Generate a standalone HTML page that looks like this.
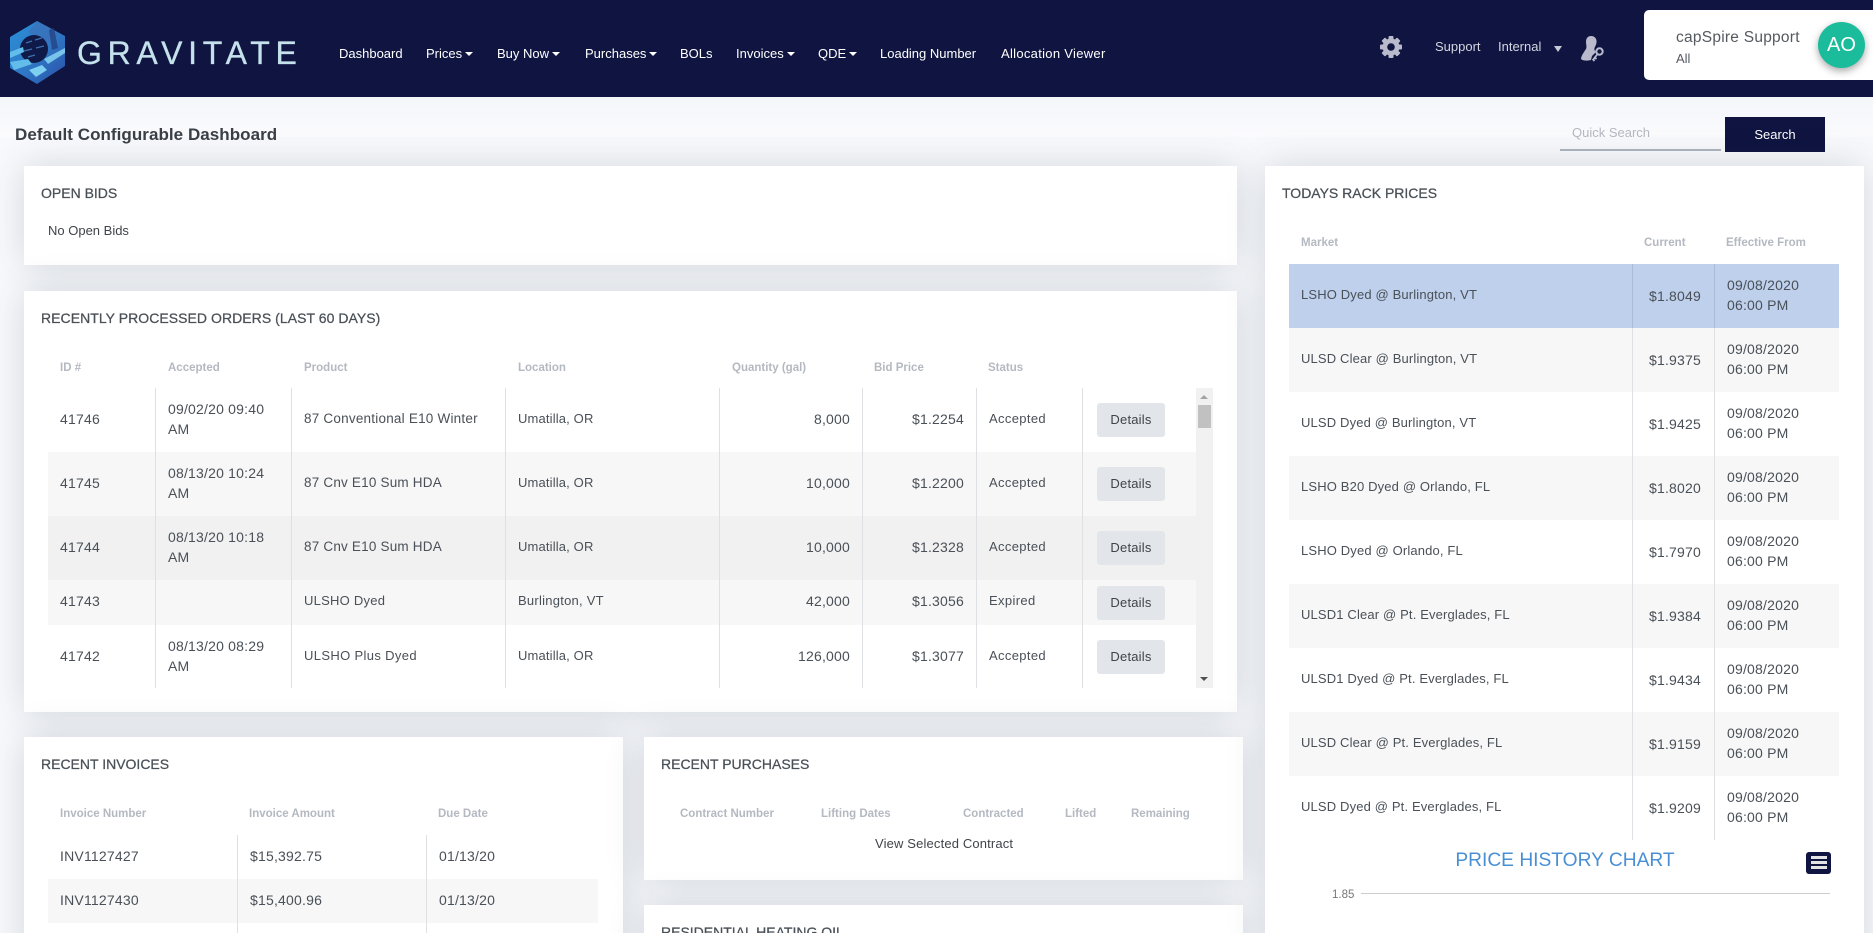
<!DOCTYPE html>
<html><head><meta charset="utf-8"><title>Gravitate</title>
<style>
html{margin:0;padding:0;width:1873px;height:933px;overflow:hidden}
body{margin:0;padding:0;width:1873px;height:933px;overflow:hidden;position:relative;background:#f8f9fc;font-family:"Liberation Sans",sans-serif;color:#3f444a;font-size:13px}
.a,.t,.h,.c,.n,.r{position:absolute}
.t,.h,.c,.n,.r{white-space:nowrap;line-height:20px}
.h{font-weight:bold;font-size:11.5px;color:#b4b9c1}
.c{font-size:13px;color:#495057;letter-spacing:.15px}
.n{color:#fff;font-size:13px}
.r{text-align:right}
.d,.m,.i{font-size:14px;letter-spacing:.2px}
.ct{position:absolute;white-space:nowrap;line-height:20px;font-size:14px;color:#495057;-webkit-text-stroke:.25px #495057}
.card{position:absolute;background:#fff;box-shadow:0 0 35px rgba(40,60,80,.18)}
.ln{position:absolute;width:1px;background:#dee0e3}
.g{position:absolute;background:#f7f7f7}
.g2{position:absolute;background:#f1f1f1}
.b{position:absolute;left:1097px;width:68px;height:34px;background:#e2e6ea;border-radius:3px;text-align:center;line-height:34px;color:#3f444a;font-size:13px;letter-spacing:.2px}
.car{display:inline-block;margin-left:3px;vertical-align:2px;border-left:4px solid transparent;border-right:4px solid transparent;border-top:4px solid #fff}
</style></head><body>

<div class="a" style="left:0;top:0;width:1873px;height:97px;background:#0f1440"></div>
<div class="a" style="left:0;top:97px;width:1873px;height:40px;background:linear-gradient(#f4f6fa,#fbfbfe)"></div>

<svg class="a" style="left:8px;top:18px" width="60" height="70" viewBox="0 0 60 70">
<defs><linearGradient id="lg" x1="0" y1="0" x2="1" y2="1"><stop offset="0" stop-color="#2a90d8"/><stop offset=".55" stop-color="#2f77c4"/><stop offset="1" stop-color="#2a4ea8"/></linearGradient></defs>
<polygon points="29,3 57,18 57,48 29,66 2,50 2,19" fill="url(#lg)"/>
<path d="M29 3L44 11 50 17 38 26 20 14Z" fill="#3f6db4" opacity=".55"/>
<circle cx="26" cy="31" r="14" fill="#0f1a48"/>
<path d="M18 25l6-2M27 22l7-2M16 33l8-2M28 30l8-2M20 39l7-2" stroke="#3d6fb0" stroke-width="1.4"/>
<path d="M2 34L15 29 16 34 2 40ZM2 44L20 41 24 46 6 52Z" fill="#63bdea"/>
<path d="M21 52L34 47 39 52 28 59Z" fill="#7ed0f0"/>
<path d="M36 41L57 30 57 35 40 46Z" fill="#78c4ea"/>
<path d="M41 12L46 10 50 30 44 32Z" fill="#243c7c" opacity=".7"/>
</svg>
<div class="t" style="left:77px;top:35px;line-height:36px;font-size:32px;letter-spacing:5.7px;color:#c4e1ec;-webkit-text-stroke:.3px #c4e1ec">GRAVITATE</div>

<div class="n" style="left:339px;top:44px">Dashboard</div>
<div class="n" style="left:426px;top:44px">Prices<span class="car"></span></div>
<div class="n" style="left:497px;top:44px">Buy Now<span class="car"></span></div>
<div class="n" style="left:585px;top:44px">Purchases<span class="car"></span></div>
<div class="n" style="left:680px;top:44px">BOLs</div>
<div class="n" style="left:736px;top:44px">Invoices<span class="car"></span></div>
<div class="n" style="left:818px;top:44px">QDE<span class="car"></span></div>
<div class="n" style="left:880px;top:44px">Loading Number</div>
<div class="n" style="left:1001px;top:44px;letter-spacing:.3px">Allocation Viewer</div>

<svg class="a" style="left:1379px;top:35px" width="24" height="24" viewBox="0 0 24 24">
<g fill="#b9bacb"><rect x="9.5" y="1" width="5" height="22" rx="1"/><rect x="9.5" y="1" width="5" height="22" rx="1" transform="rotate(45 12 12)"/><rect x="9.5" y="1" width="5" height="22" rx="1" transform="rotate(90 12 12)"/><rect x="9.5" y="1" width="5" height="22" rx="1" transform="rotate(135 12 12)"/><circle cx="12" cy="12" r="8.5"/></g>
<circle cx="12" cy="12" r="3.8" fill="#0f1440"/></svg>
<div class="n" style="left:1435px;top:37px;color:#d5d6e0">Support</div>
<div class="n" style="left:1498px;top:37px;color:#d5d6e0">Internal</div>
<div class="a" style="left:1554px;top:46px;border-left:4.5px solid transparent;border-right:4.5px solid transparent;border-top:6px solid #c8c9d6"></div>
<svg class="a" style="left:1581px;top:36px" width="24" height="26" viewBox="0 0 24 26">
<path d="M10 0C14 0 16 3 15.5 6.5C15.200 9 14 10.500 13.500 12C13 14 14 15 15 16L11 20 10 24C6 25 2 25 0 23C0 20 3 16 5 13C6 11 5 8 5 6C5 2 7 0 10 0Z" fill="#b9bacb"/>
<circle cx="18.500" cy="15.500" r="3.200" fill="none" stroke="#b9bacb" stroke-width="2"/>
<path d="M16.500 18L12 24M13 21l2.500 2M11.500 23l2 2" stroke="#b9bacb" stroke-width="1.800" fill="none"/></svg>

<div class="a" style="left:1644px;top:10px;width:229px;height:70px;background:#fff;border-radius:5px 0 0 5px"></div>
<div class="t" style="left:1676px;top:28px;font-size:15.5px;color:#555a60;letter-spacing:.25px">capSpire Support</div>
<div class="t" style="left:1676px;top:49px;font-size:13px;color:#555a60">All</div>
<div class="a" style="left:1818px;top:22px;width:47px;height:46px;border-radius:50%;background:#1abc9c;box-shadow:0 3px 8px rgba(0,0,0,.35);color:#fff;font-size:20px;line-height:46px;text-align:center">AO</div>

<div class="t" style="left:15px;top:125px;font-size:17px;font-weight:bold;color:#3a4046;letter-spacing:.05px">Default Configurable Dashboard</div>
<div class="t" style="left:1572px;top:123px;font-size:13px;color:#b4b8c0">Quick Search</div>
<div class="a" style="left:1560px;top:149px;width:161px;height:2px;background:#adb5bd"></div>
<div class="a" style="left:1725px;top:117px;width:100px;height:35px;background:#0f1440;color:#fff;text-align:center;line-height:35px;font-size:13px">Search</div>

<div class="card" style="left:24px;top:166px;width:1213px;height:99px"></div>
<div class="card" style="left:24px;top:291px;width:1213px;height:421px"></div>
<div class="card" style="left:24px;top:737px;width:599px;height:230px"></div>
<div class="card" style="left:644px;top:737px;width:599px;height:143px"></div>
<div class="card" style="left:644px;top:905px;width:599px;height:60px"></div>
<div class="card" style="left:1265px;top:166px;width:599px;height:800px"></div>

<div class="ct" style="left:41px;top:183px">OPEN BIDS</div>
<div class="t" style="left:48px;top:221px;font-size:13px;color:#3f444a">No Open Bids</div>

<div class="ct" style="left:41px;top:308px;letter-spacing:.05px">RECENTLY PROCESSED ORDERS (LAST 60 DAYS)</div>
<div class="h" style="left:60px;top:358px">ID #</div>
<div class="h" style="left:168px;top:358px">Accepted</div>
<div class="h" style="left:304px;top:358px">Product</div>
<div class="h" style="left:518px;top:358px">Location</div>
<div class="h" style="left:732px;top:358px">Quantity (gal)</div>
<div class="h" style="left:874px;top:358px">Bid Price</div>
<div class="h" style="left:988px;top:358px">Status</div>

<div class="g" style="left:48px;top:452px;width:1148px;height:64px"></div>
<div class="g2" style="left:48px;top:516px;width:1148px;height:64px"></div>
<div class="g" style="left:48px;top:580px;width:1148px;height:45px"></div>
<div class="ln" style="left:155px;top:388px;height:300px"></div>
<div class="ln" style="left:291px;top:388px;height:300px"></div>
<div class="ln" style="left:505px;top:388px;height:300px"></div>
<div class="ln" style="left:719px;top:388px;height:300px"></div>
<div class="ln" style="left:862px;top:388px;height:300px"></div>
<div class="ln" style="left:976px;top:388px;height:300px"></div>
<div class="ln" style="left:1082px;top:388px;height:300px"></div>

<div class="c i" style="left:60px;top:409px">41746</div>
<div class="c d" style="left:168px;top:399px">09/02/20 09:40<br>AM</div>
<div class="c" style="left:304px;top:409px;font-size:13.5px;letter-spacing:.22px">87 Conventional E10 Winter</div>
<div class="c" style="left:518px;top:409px">Umatilla, OR</div>
<div class="c r m" style="right:1023px;top:409px">8,000</div>
<div class="c r m" style="right:909px;top:409px">$1.2254</div>
<div class="c" style="left:989px;top:409px;letter-spacing:.35px">Accepted</div>
<div class="b" style="top:403px">Details</div>

<div class="c i" style="left:60px;top:473px">41745</div>
<div class="c d" style="left:168px;top:463px">08/13/20 10:24<br>AM</div>
<div class="c" style="left:304px;top:473px;font-size:13.5px;letter-spacing:.2px">87 Cnv E10 Sum HDA</div>
<div class="c" style="left:518px;top:473px">Umatilla, OR</div>
<div class="c r m" style="right:1023px;top:473px">10,000</div>
<div class="c r m" style="right:909px;top:473px">$1.2200</div>
<div class="c" style="left:989px;top:473px;letter-spacing:.35px">Accepted</div>
<div class="b" style="top:467px">Details</div>

<div class="c i" style="left:60px;top:537px">41744</div>
<div class="c d" style="left:168px;top:527px">08/13/20 10:18<br>AM</div>
<div class="c" style="left:304px;top:537px;font-size:13.5px;letter-spacing:.2px">87 Cnv E10 Sum HDA</div>
<div class="c" style="left:518px;top:537px">Umatilla, OR</div>
<div class="c r m" style="right:1023px;top:537px">10,000</div>
<div class="c r m" style="right:909px;top:537px">$1.2328</div>
<div class="c" style="left:989px;top:537px;letter-spacing:.35px">Accepted</div>
<div class="b" style="top:531px">Details</div>

<div class="c i" style="left:60px;top:591px">41743</div>
<div class="c" style="left:304px;top:591px;letter-spacing:.25px">ULSHO Dyed</div>
<div class="c" style="left:518px;top:591px;letter-spacing:.25px">Burlington, VT</div>
<div class="c r m" style="right:1023px;top:591px">42,000</div>
<div class="c r m" style="right:909px;top:591px">$1.3056</div>
<div class="c" style="left:989px;top:591px;letter-spacing:.35px">Expired</div>
<div class="b" style="top:586px">Details</div>

<div class="c i" style="left:60px;top:646px">41742</div>
<div class="c d" style="left:168px;top:636px">08/13/20 08:29<br>AM</div>
<div class="c" style="left:304px;top:646px;letter-spacing:.35px">ULSHO Plus Dyed</div>
<div class="c" style="left:518px;top:646px">Umatilla, OR</div>
<div class="c r m" style="right:1023px;top:646px">126,000</div>
<div class="c r m" style="right:909px;top:646px">$1.3077</div>
<div class="c" style="left:989px;top:646px;letter-spacing:.35px">Accepted</div>
<div class="b" style="top:640px">Details</div>

<div class="a" style="left:1196px;top:388px;width:17px;height:300px;background:#f1f1f1"></div>
<div class="a" style="left:1198px;top:405px;width:13px;height:23px;background:#c1c1c1"></div>
<div class="a" style="left:1200px;top:395px;border-left:4px solid transparent;border-right:4px solid transparent;border-bottom:4px solid #a3a3a3"></div>
<div class="a" style="left:1200px;top:677px;border-left:4px solid transparent;border-right:4px solid transparent;border-top:4px solid #505050"></div>

<div class="ct" style="left:41px;top:754px">RECENT INVOICES</div>
<div class="h" style="left:60px;top:804px">Invoice Number</div>
<div class="h" style="left:249px;top:804px">Invoice Amount</div>
<div class="h" style="left:438px;top:804px">Due Date</div>
<div class="g" style="left:48px;top:879px;width:550px;height:44px"></div>
<div class="ln" style="left:237px;top:835px;height:98px"></div>
<div class="ln" style="left:426px;top:835px;height:98px"></div>
<div class="c i" style="left:60px;top:846px">INV1127427</div>
<div class="c i" style="left:250px;top:846px">$15,392.75</div>
<div class="c i" style="left:439px;top:846px">01/13/20</div>
<div class="c i" style="left:60px;top:890px">INV1127430</div>
<div class="c i" style="left:250px;top:890px">$15,400.96</div>
<div class="c i" style="left:439px;top:890px">01/13/20</div>

<div class="ct" style="left:661px;top:754px">RECENT PURCHASES</div>
<div class="h" style="left:680px;top:804px">Contract Number</div>
<div class="h" style="left:821px;top:804px">Lifting Dates</div>
<div class="h" style="left:963px;top:804px">Contracted</div>
<div class="h" style="left:1065px;top:804px">Lifted</div>
<div class="h" style="left:1131px;top:804px">Remaining</div>
<div class="c" style="left:875px;top:834px;color:#3f444a">View Selected Contract</div>
<div class="ct" style="left:661px;top:922px">RESIDENTIAL HEATING OIL</div>

<div class="ct" style="left:1282px;top:183px">TODAYS RACK PRICES</div>
<div class="h" style="left:1301px;top:233px">Market</div>
<div class="h" style="left:1644px;top:233px">Current</div>
<div class="h" style="left:1726px;top:233px">Effective From</div>

<div class="a" style="left:1289px;top:264px;width:550px;height:64px;background:#bfd0ec"></div>
<div class="g" style="left:1289px;top:328px;width:550px;height:64px"></div>
<div class="g" style="left:1289px;top:456px;width:550px;height:64px"></div>
<div class="g" style="left:1289px;top:584px;width:550px;height:64px"></div>
<div class="g" style="left:1289px;top:712px;width:550px;height:64px"></div>
<div class="ln" style="left:1632px;top:264px;height:576px"></div>
<div class="ln" style="left:1714px;top:264px;height:576px"></div>
<div class="a" style="left:1632px;top:264px;width:1px;height:64px;background:#a9bbd8"></div>
<div class="a" style="left:1714px;top:264px;width:1px;height:64px;background:#a9bbd8"></div>

<div class="c" style="left:1301px;top:285px">LSHO Dyed @ Burlington, VT</div><div class="c r m" style="right:172px;top:286px">$1.8049</div><div class="c d" style="left:1727px;top:275px">09/08/2020<br>06:00 PM</div>
<div class="c" style="left:1301px;top:349px">ULSD Clear @ Burlington, VT</div><div class="c r m" style="right:172px;top:350px">$1.9375</div><div class="c d" style="left:1727px;top:339px">09/08/2020<br>06:00 PM</div>
<div class="c" style="left:1301px;top:413px">ULSD Dyed @ Burlington, VT</div><div class="c r m" style="right:172px;top:414px">$1.9425</div><div class="c d" style="left:1727px;top:403px">09/08/2020<br>06:00 PM</div>
<div class="c" style="left:1301px;top:477px">LSHO B20 Dyed @ Orlando, FL</div><div class="c r m" style="right:172px;top:478px">$1.8020</div><div class="c d" style="left:1727px;top:467px">09/08/2020<br>06:00 PM</div>
<div class="c" style="left:1301px;top:541px">LSHO Dyed @ Orlando, FL</div><div class="c r m" style="right:172px;top:542px">$1.7970</div><div class="c d" style="left:1727px;top:531px">09/08/2020<br>06:00 PM</div>
<div class="c" style="left:1301px;top:605px">ULSD1 Clear @ Pt. Everglades, FL</div><div class="c r m" style="right:172px;top:606px">$1.9384</div><div class="c d" style="left:1727px;top:595px">09/08/2020<br>06:00 PM</div>
<div class="c" style="left:1301px;top:669px">ULSD1 Dyed @ Pt. Everglades, FL</div><div class="c r m" style="right:172px;top:670px">$1.9434</div><div class="c d" style="left:1727px;top:659px">09/08/2020<br>06:00 PM</div>
<div class="c" style="left:1301px;top:733px">ULSD Clear @ Pt. Everglades, FL</div><div class="c r m" style="right:172px;top:734px">$1.9159</div><div class="c d" style="left:1727px;top:723px">09/08/2020<br>06:00 PM</div>
<div class="c" style="left:1301px;top:797px">ULSD Dyed @ Pt. Everglades, FL</div><div class="c r m" style="right:172px;top:798px">$1.9209</div><div class="c d" style="left:1727px;top:787px">09/08/2020<br>06:00 PM</div>

<div class="t" style="left:1425px;width:280px;text-align:center;top:851px;font-size:19.2px;color:#4a8fd4">PRICE HISTORY CHART</div>
<div class="a" style="left:1806px;top:852px;width:25px;height:22px;background:#101440;border-radius:3px"></div>
<div class="a" style="left:1811px;top:856px;width:16px;height:3px;background:#e3e3e3"></div>
<div class="a" style="left:1811px;top:861px;width:16px;height:3px;background:#e3e3e3"></div>
<div class="a" style="left:1811px;top:866px;width:16px;height:3px;background:#e3e3e3"></div>
<div class="t" style="left:1332px;top:885px;font-size:11.5px;color:#777">1.85</div>
<div class="a" style="left:1361px;top:893px;width:469px;height:1px;background:#ccc"></div>

</body></html>
